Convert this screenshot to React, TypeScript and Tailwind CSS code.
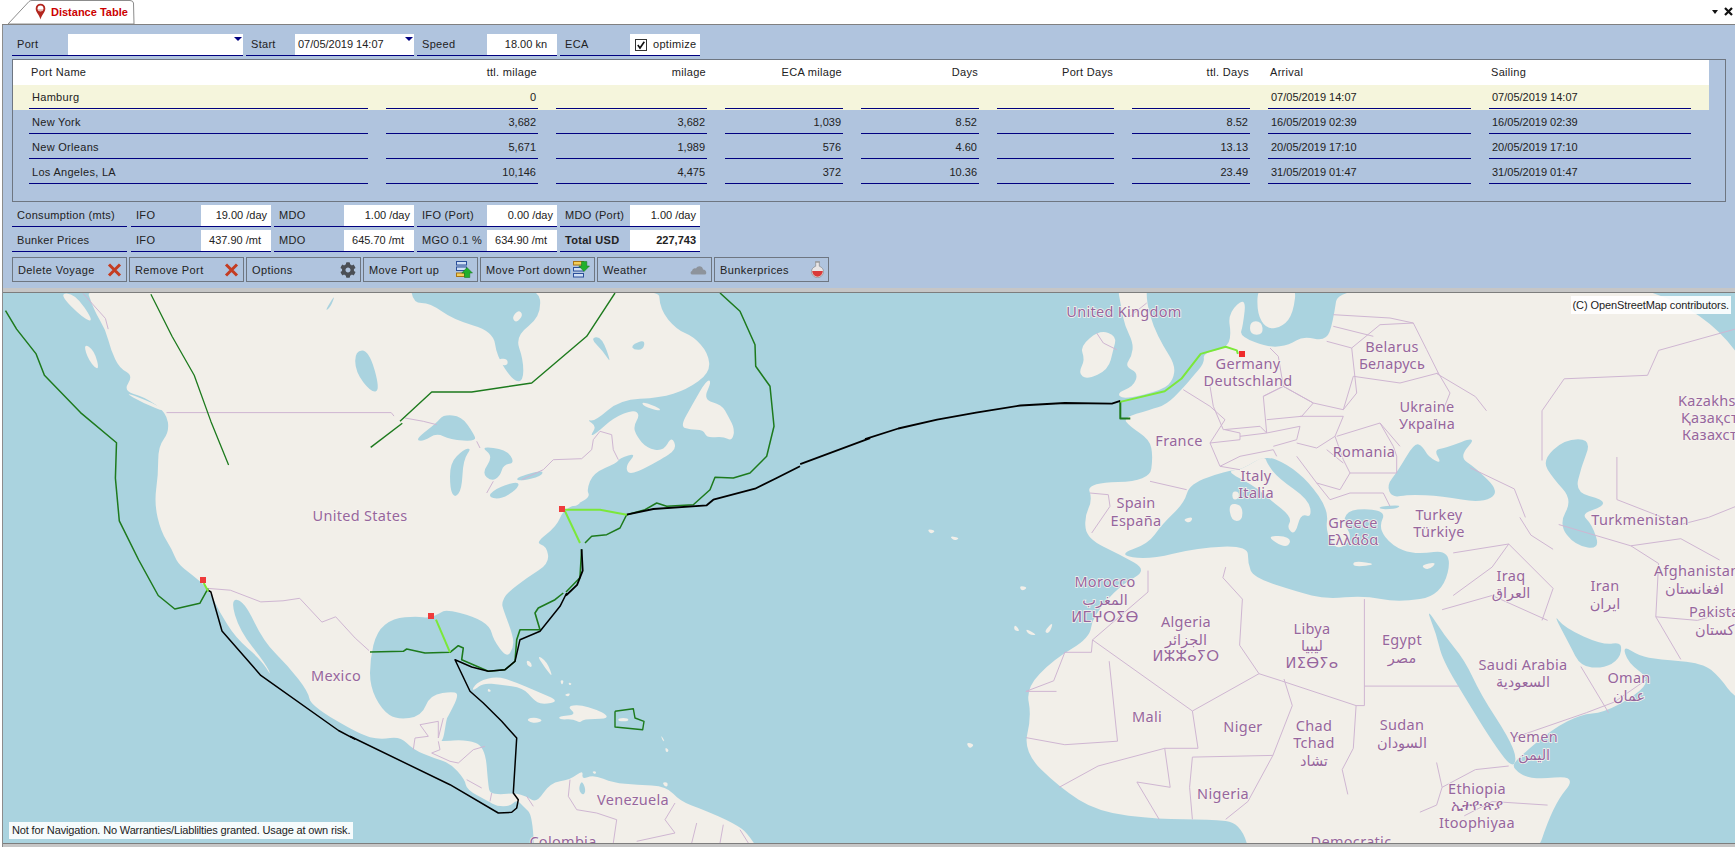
import React from "react";
import { FaCog } from "react-icons/fa";

const LAND = "#f2efe9";
const WATER = "#aad3df";
const BORDER = "#cfb6d2";
const DARK = "#1d7a1d";
const LIME = "#7be83a";

type Xf = [number, number, number, number];

// crops the shapes were traced from: page x = tx + x * sx, page y = ty + y * sy
const A: Xf = [0, 290, 0.55494, 0.35524];
const B: Xf = [865, 290, 0.55494, 0.35524];
const C: Xf = [1050, 293, 1 / 3, 1 / 3];
const D: Xf = [400, 293, 1 / 3, 1 / 3];
const E: Xf = [350, 593, 1 / 3, 1 / 3];

const seg = (f: Xf, s: string) =>
  s.split(" ").map((p) => {
    const [x, y] = p.split(",").map(Number);
    return [f[0] + x * f[2], f[1] + y * f[3]];
  });

const mid = (a: number[], b: number[]) => `${((a[0] + b[0]) / 2).toFixed(1)} ${((a[1] + b[1]) / 2).toFixed(1)}`;

// rounded closed outline through the midpoints
const blob = (pts: number[][]) => {
  let d = `M${mid(pts[pts.length - 1], pts[0])}`;
  pts.forEach((p, i) => {
    d += ` Q${p[0].toFixed(1)} ${p[1].toFixed(1)} ${mid(p, pts[(i + 1) % pts.length])}`;
  });
  return d + "Z";
};

const line = (pts: number[][]) => pts.map((p) => `${p[0].toFixed(1)},${p[1].toFixed(1)}`).join(" ");

const NORTH_AMERICA = [
  ...seg(A, "150,-30 170,60 190,110 200,170 215,220 240,240 222,285 260,300 300,345 305,400 285,440 285,520 278,600 290,680 310,730 320,770 345,800 375,840 395,905 425,980 470,1040 490,1090 478,1050 432,960 415,870 440,875 475,990 520,1060 555,1130 560,1170"),
  ...seg(E, "30,425 90,440 150,430 190,470 250,495 300,510 345,560 350,590 415,625 440,640 480,640 500,620 520,640 550,670 555,900 1300,900 1200,725 1150,690 1060,650 990,625 950,580 860,575 790,570 730,545 695,560 700,530 660,560 600,570 560,630 530,610 495,600 450,605 420,600 415,580 405,460 350,440 270,445 280,440 290,375 295,370 325,310 315,295 240,305 215,370 140,380 95,350 60,280 60,200 80,115 130,75 200,70 240,75 270,60 290,50 370,70 420,100 430,140 470,195 490,165 490,130 460,50 455,30 470,0"),
  ...seg(A, "950,810 990,770 985,720"),
  ...seg(D, "405,750 470,700 490,650 540,630 570,610 560,590 580,540 650,510 660,495 710,480 675,520 690,550 800,490 830,465 815,430 790,475 740,465 710,430 700,400 720,365 700,350 640,375 590,420 570,430 590,400 560,380 585,385 660,320 780,315 860,290 930,240 925,180 880,130 830,110 780,50 775,-30"),
];

const WATER_SHAPES: [Xf, string][] = [
  [D, "30,-30 40,30 90,30 160,80 280,115 290,190 340,265 370,265 370,200 345,130 425,70 415,-30"],
  [D, "45,440 110,390 130,365 185,370 220,420 230,445 150,440 110,420 70,445"],
  [D, "150,510 190,470 215,465 190,500 185,590 165,615 150,590"],
  [D, "240,460 320,470 345,510 310,515 300,550 275,565 245,540 280,490"],
  [D, "260,610 300,580 360,565 350,590 300,620"],
  [D, "345,555 430,530 425,550 360,565"],
  [D, "695,155 735,140 730,170 700,170"],
  [D, "570,135 605,130 635,215 610,175"],
  [E, "695,560 708,590 700,608 685,590"],
  [A, "640,170 665,170 685,280 670,290 640,230"],
  [A, "585,60 605,10 595,50"],
  // Mediterranean, Black Sea, Marmara, Caspian, Red Sea, Gulf
  [B, "455,745 510,715 535,660 575,600 585,545 650,510 680,505 720,465 760,490 800,540 835,620 830,680 850,735 880,700 860,650 875,615 940,620 925,670 950,720 990,745 1060,730 1040,860 960,880 900,860 830,870 780,850 700,810 690,770 690,720 600,725 510,760"],
  [B, "940,550 960,510 990,430 1005,440 1015,470 1040,490 1025,450 1045,445 1105,410 1070,470 1100,500 1145,570 1110,600 1040,580 980,575 950,585"],
  [B, "925,610 965,605 960,615 930,618"],
  [B, "1220,480 1260,420 1310,420 1290,500 1280,570 1330,590 1330,610 1290,630 1310,660 1325,730 1280,720 1250,660 1275,590 1240,530"],
  [B, "1010,890 1045,975 1080,1040 1110,1140 1160,1260 1175,1320 1165,1345 1130,1270 1090,1170 1040,1040 1030,970"],
  [B, "1240,910 1260,950 1330,1000 1365,990 1360,1040 1330,1065 1290,1060 1270,1000"],
];

const LAND_SHAPES: [Xf, string][] = [
  [A, "105,10 135,10 170,90 150,80"],
  [A, "150,150 170,170 180,230 160,200"],
  [A, "220,285 280,320 300,345 260,320"],
  [D, "335,75 355,50 370,65 350,90"],
  [D, "290,200 320,195 325,215 305,218"],
  [D, "725,325 780,345 780,355 730,340"],
  [D, "840,400 880,330 920,260 935,265 910,320 965,335 985,370 1005,410 995,445 970,430 920,435 910,410 870,410"],
  [D, "495,640 545,625 530,640"],
  [E, "365,290 385,265 440,250 490,265 560,295 630,325 575,335 550,320 520,285 450,275 400,270 375,290"],
  [E, "415,285 425,295 412,297"],
  [E, "625,370 680,365 650,340 690,335 740,350 770,365 770,378 700,378 690,390 670,378 630,380"],
  [E, "530,378 555,372 580,382 560,390 540,388"],
  [E, "805,375 835,375 835,385 805,385"],
  [E, "530,200 545,210 545,225 530,215"],
  [E, "560,185 590,205 610,255 585,225"],
  [E, "630,262 642,262 636,278"],
  [E, "655,268 667,272 658,278"],
  [E, "642,305 662,300 655,312"],
  [E, "725,535 740,535 735,545"],
  [E, "935,568 955,568 950,585"],
  [E, "932,425 945,445 938,445"],
  [E, "945,462 958,472 948,480"],
  // Italy and the Mediterranean islands
  [B, "650,510 680,505 720,465 725,490 745,530 800,590 805,640 785,630 775,690 760,670 770,640 730,590 700,550"],
  [B, "720,690 770,695 760,730"],
  [B, "655,600 680,605 680,650 660,650"],
  [B, "662,565 675,570 672,590 662,590"],
  [B, "880,762 925,772 880,780"],
  [B, "1000,775 1032,765 1015,790"],
  [B, "572,645 592,638 585,658"],
  [B, "112,672 128,678 118,688"],
  [B, "152,692 172,698 160,706"],
  [B, "278,832 294,838 282,848"],
  [B, "270,940 280,962 268,958"],
  [B, "288,952 312,972 295,970"],
  [B, "322,962 340,932 332,968"],
  [B, "182,1272 198,1280 188,1292"],
  // British Isles, Scandinavia
  [C, "200,-30 290,-30 290,30 310,100 340,160 375,215 370,260 340,290 220,320 200,300 250,280 265,240 225,220 245,190 250,150 225,100 215,50"],
  [C, "90,160 150,110 200,130 190,170 175,230 110,260 85,240 105,200"],
  [C, "625,-30 740,-30 730,60 700,100 650,110 620,60"],
  [C, "600,85 635,85 640,125 600,125"],
];

const BORDERS: [Xf, string][] = [
  [A, "300,345 705,345 710,355"],
  [A, "375,840 415,845 470,878 510,875 540,868 580,935 605,920 640,980 665,1015"],
  [A, "150,10 190,80 195,110"],
  [D, "15,375 70,385 110,395"],
  [D, "230,445 240,465"],
  [D, "260,600 280,565"],
  [D, "365,560 430,530 460,500 545,497 575,470 580,440 600,415 635,425 640,470 655,500"],
  [E, "190,470 195,435 235,430 210,395 265,385 265,435 280,375"],
  [E, "265,445 270,470 245,480 300,505"],
  [E, "300,505 325,510 370,470 405,460"],
  [E, "350,560 395,585"],
  [E, "425,600 420,625"],
  [E, "530,610 550,640"],
  [E, "660,560 655,610 680,650 740,660 800,680 790,750"],
  [E, "975,630 945,680 975,720 860,745"],
  [E, "1040,690 1025,750"],
  [E, "1120,695 1110,750"],
  [E, "1170,710 1195,750"],
  [B, "510,790 510,850 410,985 408,1020 360,1020 340,1100 290,1130 345,1130"],
  [B, "410,985 590,1185 710,1080"],
  [B, "440,1045 455,1270 360,1280 290,1260"],
  [B, "590,1185 600,1290 540,1290 420,1340 350,1400"],
  [B, "650,780 645,810 680,870 675,1000 710,1080 750,1100 885,1170"],
  [B, "900,870 900,1170 885,1170 880,1290 860,1350 870,1420"],
  [B, "900,1115 1070,1115"],
  [B, "755,1095 770,1170 735,1310 590,1315 585,1400 590,1490"],
  [B, "735,1310 690,1440 650,1490"],
  [B, "1030,1330 1040,1400 1030,1450 1000,1470"],
  [B, "1160,1340 1100,1350 1040,1400"],
  [B, "1230,1450 1130,1440 1080,1480"],
  [B, "540,1290 550,1400 490,1385 530,1490"],
  [B, "1060,740 1160,715 1240,840 1220,930"],
  [B, "1060,860 1130,780 1160,715"],
  [B, "1130,860 1230,930"],
  [B, "1040,900 1130,860"],
  [B, "1290,1060 1340,1190"],
  [B, "1170,1260 1300,1190 1350,1160 1410,1095"],
  [B, "1380,720 1430,770 1425,920 1470,1040"],
  [B, "1180,640 1200,690 1240,730"],
  [B, "1250,660 1380,720 1470,700 1540,760"],
  [B, "1355,470 1355,590 1470,660 1520,640 1568,610"],
  [B, "1220,480 1220,340 1260,250 1410,240 1430,170 1568,110"],
  [B, "1120,340 1100,300 1030,235"],
  [B, "1425,920 1500,930 1568,900"],
  [B, "1090,500 1170,560 1190,640"],
  [C, "480,280 490,340 520,410 630,400 650,420 640,310 700,280 685,190 660,165"],
  [C, "640,310 700,280 790,330 755,370 650,380"],
  [C, "700,280 790,330 880,350 920,300 905,165 830,145"],
  [C, "300,565 410,590"],
  [C, "400,290 480,340 525,380 480,450 510,520 570,530"],
  [C, "480,450 570,440 570,420 525,410"],
  [C, "510,520 570,490 670,470 680,490"],
  [C, "570,430 650,420 750,400 740,440 670,460"],
  [C, "750,370 880,370 855,430 800,465 740,450"],
  [C, "860,430 990,390 1030,460 1040,490 1040,540 900,540 880,500 855,430"],
  [C, "905,165 990,95 1090,90 1130,170 1165,240 1050,270 910,250 880,350"],
  [C, "850,100 970,130"],
  [C, "850,65 1020,75 1090,90"],
  [C, "990,390 1050,460"],
  [C, "740,490 800,570 870,590 900,540"],
  [C, "830,470 880,510"],
  [C, "800,570 840,620 900,600 1000,600 1020,640"],
  [C, "120,600 175,605 180,640 125,720"],
  [C, "1165,240 1200,300 1180,350"],
  [C, "140,120 160,150 200,170"],
  [C, "290,30 240,70"],
];

const EURASIA_AFRICA =
  "855,-30 1640,-30 1640,1200 1568,1150 1540,1090 1510,1050 1430,1040 1395,1030 1365,1000 1375,1050 1415,1095 1390,1140 1330,1190 1290,1195 1240,1235 1175,1320 1165,1345 1200,1380 1285,1365 1240,1450 1200,1640 700,1640 680,1500 620,1490 530,1490 420,1470 350,1400 285,1300 300,1200 290,1120 340,1040 405,980 410,920 460,830 510,790 460,745 400,700 395,640 410,590 399,543 513,538 519,468 513,421 477,384 465,360 513,337 543,323 573,276 591,243 612,205 609,177 651,163 660,130 654,65 687,18 681,102 675,130 729,163 765,154 789,130 831,144 843,93";

const ROUTES: [Xf, string, string, number][] = [
  [A, "272,12 310,130 350,240 380,370 412,493", DARK, 1.3],
  [D, "645,0 560,130 395,270 215,297 95,297 0,385", DARK, 1.4],
  [A, "668,443 725,375", DARK, 1.4],
  [A, "10,58 30,110 65,180 80,240 145,345 210,430 208,530 215,650 250,760 285,860 315,898 360,882 375,840", DARK, 1.5],
  [D, "960,0 1020,55 1065,155 1067,220 1110,280 1122,400 1100,490 1050,540 1000,555 945,553 930,590 880,635 800,640 770,630 735,650 680,665", DARK, 1.5],
  [D, "680,665 660,705 620,725 575,730 555,750", DARK, 1.5],
  [A, "1048,730 1045,810 1020,850", DARK, 1.5],
  [E, "640,0 615,20 565,45 555,60 570,110 510,110 500,140 495,205 465,230 415,235 335,200 340,165 325,158 300,178 225,180 170,168 160,175 60,177", DARK, 1.6],
  [E, "795,355 850,347 855,375 882,385 878,410 795,402 795,355", DARK, 1.4],
  [D, "1200,520 1130,555 1065,587 940,620 920,637 760,648 680,665", "#000", 1.8],
  [A, "1568,417 1442,490", "#000", 1.8],
  [A, "1048,730 1050,790 1040,830 1020,860", "#000", 1.8],
  [E, "650,0 630,40 570,115 510,140 495,205 465,230 415,235 365,222 315,200 360,295 400,330 455,385 500,435 490,600 505,620 500,645 485,658 445,660 300,575 0,430", "#000", 1.5],
  [A, "640,1265 610,1240 470,1085 400,960 380,850 375,845", "#000", 1.5],
  [D, "490,650 600,650 680,665", LIME, 2],
  [D, "495,655 540,750", LIME, 2],
  [E, "258,80 300,178", LIME, 2],
  [A, "367,825 375,848", LIME, 2],
  [B, "0,420 60,390 130,365 200,345 280,325 360,318 445,320 460,312", "#000", 1.8],
  [B, "460,315 460,362 478,362", DARK, 2],
  [B, "460,315 540,285 570,250 605,180 650,160 670,170 672,180", LIME, 2],
];

const LABELS: [string, number, number][] = [
  ["United States", 360, 515],
  ["Mexico", 336, 675],
  ["Venezuela", 633, 799],
  ["Colombia", 563, 841],
  ["United Kingdom", 1124, 311],
  ["Germany", 1248, 363],
  ["Deutschland", 1248, 380],
  ["Belarus", 1392, 346],
  ["Беларусь", 1392, 363],
  ["Ukraine", 1427, 406],
  ["Україна", 1427, 423],
  ["France", 1179, 440],
  ["Romania", 1364, 451],
  ["Italy", 1256, 475],
  ["Italia", 1256, 492],
  ["Spain", 1136, 502],
  ["España", 1136, 520],
  ["Greece", 1353, 522],
  ["Ελλάδα", 1353, 539],
  ["Turkey", 1439, 514],
  ["Türkiye", 1439, 531],
  ["Turkmenistan", 1640, 519],
  ["Iraq", 1511, 575],
  ["العراق", 1511, 592],
  ["Iran", 1605, 585],
  ["ایران", 1605, 603],
  ["Morocco", 1105, 581],
  ["المغرب", 1105, 599],
  ["ⵍⵎⵖⵔⵉⴱ", 1105, 616],
  ["Algeria", 1186, 621],
  ["الجزائر", 1186, 639],
  ["ⵍⵣⵣⴰⵢⵔ", 1186, 655],
  ["Libya", 1312, 628],
  ["ليبيا", 1312, 645],
  ["ⵍⵉⴱⵢⴰ", 1312, 662],
  ["Egypt", 1402, 639],
  ["مصر", 1402, 657],
  ["Saudi Arabia", 1523, 664],
  ["السعودية", 1523, 681],
  ["Oman", 1629, 677],
  ["عمان", 1629, 695],
  ["Mali", 1147, 716],
  ["Niger", 1243, 726],
  ["Chad", 1314, 725],
  ["Tchad", 1314, 742],
  ["تشاد", 1314, 760],
  ["Sudan", 1402, 724],
  ["السودان", 1402, 742],
  ["Yemen", 1534, 736],
  ["اليمن", 1534, 754],
  ["Nigeria", 1223, 793],
  ["Ethiopia", 1477, 788],
  ["ኢትዮጵያ", 1477, 804],
  ["Itoophiyaa", 1477, 822],
  ["Democratic", 1351, 841],
];

// the ones cut off by the right edge start at a fixed x
const EDGE_LABELS: [string, number, number][] = [
  ["Kazakhstan", 1678, 400],
  ["Қазақстан", 1681, 417],
  ["Казахстан", 1682, 434],
  ["Afghanistan", 1654, 570],
  ["افغانستان", 1665, 588],
  ["Pakistan", 1689, 611],
  ["پاکستان", 1695, 629],
];

const MapView = () => (
  <svg viewBox="3 293 1732 550" className="block w-[1732px] h-[550px]">
    <rect x="0" y="293" width="1735" height="550" fill={WATER} />
    <path d={blob(NORTH_AMERICA)} fill={LAND} />
    <path d={blob(seg(B, EURASIA_AFRICA))} fill={LAND} />
    {WATER_SHAPES.map(([f, s]) => (
      <path key={s} d={blob(seg(f, s))} fill={WATER} />
    ))}
    {LAND_SHAPES.map(([f, s]) => (
      <path key={s} d={blob(seg(f, s))} fill={LAND} />
    ))}
    {BORDERS.map(([f, s]) => (
      <polyline key={s} points={line(seg(f, s))} fill="none" stroke={BORDER} strokeWidth="1" strokeLinejoin="round" />
    ))}

    <g
      className="font-['Noto_Sans','DejaVu_Sans',sans-serif] text-[14.5px] [paint-order:stroke]"
      fill="#96669d"
      stroke="#f6f3ee"
      strokeWidth="1.5"
    >
      {LABELS.map(([t, x, y]) => (
        <text key={t} x={x} y={y} textAnchor="middle" dominantBaseline="central">
          {t}
        </text>
      ))}
      {EDGE_LABELS.map(([t, x, y]) => (
        <text key={t} x={x} y={y} dominantBaseline="central">
          {t}
        </text>
      ))}
    </g>

    {ROUTES.map(([f, s, color, w]) => (
      <polyline key={s + color} points={line(seg(f, s))} fill="none" stroke={color} strokeWidth={w} strokeLinejoin="round" />
    ))}

    <rect x="559" y="506" width="6" height="6" fill="#ef3b3b" />
    <rect x="428" y="613" width="6" height="6" fill="#ef3b3b" />
    <rect x="200" y="577" width="6" height="6" fill="#ef3b3b" />
    <rect x="1239" y="351" width="6" height="6" fill="#ef2b2b" />
  </svg>
);

const PinIcon = () => (
  <svg width="11" height="17" viewBox="0 0 11 17">
    <path d="M5.5 16.5 C4.5 12 .7 9.5 .7 5.5 A4.8 4.8 0 0 1 10.3 5.5 C10.3 9.5 6.5 12 5.5 16.5Z" fill="#b3261e" />
    <circle cx="5.5" cy="5.3" r="2.9" fill="#fff" />
    <path d="M2.6 6.2 A3 3 0 0 0 8.4 6.2Z" fill="#e8b7b0" />
  </svg>
);

const RedX = () => (
  <svg width="15" height="14" viewBox="0 0 15 14">
    <path d="M2 1.5 L13 12.5 M13 1.5 L2 12.5" stroke="#c43c22" strokeWidth="3" />
  </svg>
);

const MoveUpIcon = () => (
  <svg width="17" height="17" viewBox="0 0 17 17">
    <rect x=".5" y=".5" width="10" height="3.5" fill="#cfe0f5" stroke="#2a4f9a" />
    <rect x=".5" y="6" width="10" height="3.5" fill="#cfe0f5" stroke="#2a4f9a" />
    <rect x=".5" y="12" width="8" height="3.5" fill="#f2cf5a" stroke="#a87414" />
    <path d="M11 6 L16.5 11.5 H13.8 V16 H8.5 V11.5 H5.8Z" transform="translate(0 .5)" fill="#22b02c" stroke="#13701a" strokeWidth=".5" />
  </svg>
);

const MoveDownIcon = () => (
  <svg width="17" height="17" viewBox="0 0 17 17">
    <rect x=".5" y=".5" width="10" height="3.5" fill="#f2cf5a" stroke="#a87414" />
    <rect x=".5" y="6.5" width="10" height="3.5" fill="#cfe0f5" stroke="#2a4f9a" />
    <rect x=".5" y="12.5" width="10" height="3.5" fill="#cfe0f5" stroke="#2a4f9a" />
    <path d="M11 10.5 L16.5 5 H13.8 V.5 H8.5 V5 H5.8Z" fill="#22b02c" stroke="#13701a" strokeWidth=".5" />
  </svg>
);

const CloudIcon = () => (
  <svg width="17" height="10" viewBox="0 0 17 10">
    <path d="M2 9.5 C.2 9.5 0 6.5 2 6 C2.5 3 5 2.8 6 3.5 C7.5 .2 12.5 .2 13 4.5 C16.5 4.5 17.5 9.5 14.5 9.5Z" fill="#8d939b" />
  </svg>
);

const FlaskIcon = () => (
  <svg width="13" height="17" viewBox="0 0 13 17">
    <path d="M4.7 1 H8.3 V5.2 C11 6.2 12.5 8.2 12.5 10.6 A6 6 0 0 1 .5 10.6 C.5 8.2 2 6.2 4.7 5.2Z" fill="#e9e6e6" stroke="#8a8a8a" strokeWidth=".7" />
    <path d="M1.2 10 H11.8 A5.3 5.7 0 0 1 1.2 10Z" fill="#d93a3a" />
    <rect x="4" y=".3" width="5" height="1.2" fill="#9a9a9a" />
  </svg>
);

const Field = ({
  label,
  w,
  labelW,
  bold,
  children,
}: {
  label: string;
  w: number;
  labelW: number;
  bold?: boolean;
  children?: React.ReactNode;
}) => (
  <div className="flex h-[22px] border-b border-[#000080] shrink-0" style={{ width: w }}>
    <div className={`pl-[5px] leading-[21px] shrink-0 ${bold ? "font-bold" : ""}`} style={{ width: labelW }}>
      {label}
    </div>
    <div className="relative flex-1 bg-white leading-[21px]">{children}</div>
  </div>
);

const Arrow = () => (
  <div className="absolute right-[1px] top-[3px] w-0 h-0 border-l-[4px] border-r-[4px] border-t-[4px] border-l-transparent border-r-transparent border-t-[#000080]" />
);

const Value = ({ text, pr, bold }: { text: string; pr: number; bold?: boolean }) => (
  <div className={`text-right tracking-normal ${bold ? "font-bold" : ""}`} style={{ paddingRight: pr }}>
    {text}
  </div>
);

const COLS = "grid grid-cols-[339px_152px_151px_118px_118px_117px_118px_203px_202px] gap-x-[18px] pl-[16px]";

const HEADERS: [string, boolean][] = [
  ["Port Name", false],
  ["ttl. milage", true],
  ["milage", true],
  ["ECA milage", true],
  ["Days", true],
  ["Port Days", true],
  ["ttl. Days", true],
  ["Arrival", false],
  ["Sailing", false],
];

const ROWS = [
  ["Hamburg", "0", "", "", "", "", "", "07/05/2019 14:07", "07/05/2019 14:07"],
  ["New York", "3,682", "3,682", "1,039", "8.52", "", "8.52", "16/05/2019 02:39", "16/05/2019 02:39"],
  ["New Orleans", "5,671", "1,989", "576", "4.60", "", "13.13", "20/05/2019 17:10", "20/05/2019 17:10"],
  ["Los Angeles, LA", "10,146", "4,475", "372", "10.36", "", "23.49", "31/05/2019 01:47", "31/05/2019 01:47"],
];

const BUTTONS: [string, React.ReactNode][] = [
  ["Delete Voyage", <RedX />],
  ["Remove Port", <RedX />],
  ["Options", <FaCog className="text-[16px] text-[#4b4f55]" />],
  ["Move Port up", <MoveUpIcon />],
  ["Move Port down", <MoveDownIcon />],
  ["Weather", <CloudIcon />],
  ["Bunkerprices", <FlaskIcon />],
];

export default function App() {
  return (
    <div className="w-[1735px] h-[847px] overflow-hidden bg-white flex flex-col font-['Liberation_Sans','Noto_Sans',sans-serif] text-[11px] tracking-[0.3px] text-[#222]">
      <div className="flex items-end justify-between h-[25px] pl-[6px] pr-[2px] border-b border-[#808080] ml-[2px] shrink-0">
        <div className="relative w-[127px] h-[25px]">
          <svg className="absolute inset-0" width="127" height="25" viewBox="0 0 127 25">
            <path d="M0 25 L21 2.5 Q22 1.5 24 1.5 H122 Q125 1.5 125.5 4 L126 25 Z" fill="#fff" stroke="#8c8c8c" />
          </svg>
          <div className="absolute left-[27px] top-[4px]">
            <PinIcon />
          </div>
          <div className="absolute left-[43px] top-[7px] font-bold text-[#cc0000] tracking-normal leading-[13px] whitespace-nowrap">
            Distance Table
          </div>
        </div>
        <div className="flex items-center gap-[6px] h-[24px] pb-[1px]">
          <div className="w-0 h-0 border-l-[3.5px] border-r-[3.5px] border-t-[4px] border-l-transparent border-r-transparent border-t-[#111]" />
          <svg width="9" height="9" viewBox="0 0 9 9">
            <path d="M1 1 L8 8 M8 1 L1 8" stroke="#111" strokeWidth="2.2" />
          </svg>
        </div>
      </div>

      <div className="flex flex-col flex-1 ml-[2px] border-l border-[#8c8c8c] min-h-0">
        <div className="bg-[#b0c4de] h-[263px] pt-[9px] pl-[9px] shrink-0">
          <div className="flex gap-[3px]">
            <Field label="Port" w={231} labelW={56}>
              <Arrow />
            </Field>
            <Field label="Start" w={168} labelW={49}>
              <div className="pl-[3px] tracking-normal">07/05/2019 14:07</div>
              <Arrow />
            </Field>
            <Field label="Speed" w={140} labelW={70}>
              <Value text="18.00 kn" pr={10} />
            </Field>
            <Field label="ECA" w={140} labelW={70}>
              <div className="flex items-center h-full pl-[5px] gap-[6px]">
                <svg width="12" height="12" viewBox="0 0 12 12" className="shrink-0">
                  <rect x=".5" y=".5" width="11" height="11" fill="#fff" stroke="#333" />
                  <path d="M2.8 6 L5 9 L9.3 2.8" fill="none" stroke="#111" strokeWidth="1.6" />
                </svg>
                optimize
              </div>
            </Field>
          </div>

          <div className="mt-[3px] w-[1714px] h-[143px] border border-[#6e7681]">
            <div className={`${COLS} w-[1696px] h-[25px] bg-white leading-[25px]`}>
              {HEADERS.map(([h, right]) => (
                <div key={h} className={right ? "text-right pr-[1px]" : "pl-[2px]"}>
                  {h}
                </div>
              ))}
            </div>
            {ROWS.map((row, i) => (
              <div key={row[0]} className={`${COLS} w-[1696px] h-[25px] ${i === 0 ? "bg-[#f5f5dc]" : ""}`}>
                {row.map((c, j) => (
                  <div
                    key={j}
                    className={`h-[24px] border-b border-[#000080] leading-[25px] ${
                      j > 0 ? "tracking-normal" : ""
                    } ${j > 0 && j < 7 ? "text-right pr-[2px]" : "pl-[3px]"}`}
                  >
                    {c}
                  </div>
                ))}
              </div>
            ))}
          </div>

          <div className="flex mt-[3px]">
            <Field label="Consumption (mts)" w={115} labelW={115} />
            <div className="flex gap-[3px] ml-[4px]">
              <Field label="IFO" w={140} labelW={70}>
                <Value text="19.00 /day" pr={4} />
              </Field>
              <Field label="MDO" w={140} labelW={70}>
                <Value text="1.00 /day" pr={4} />
              </Field>
              <Field label="IFO (Port)" w={140} labelW={70}>
                <Value text="0.00 /day" pr={4} />
              </Field>
              <Field label="MDO (Port)" w={140} labelW={70}>
                <Value text="1.00 /day" pr={4} />
              </Field>
            </div>
          </div>

          <div className="flex mt-[3px]">
            <Field label="Bunker Prices" w={115} labelW={115} />
            <div className="flex gap-[3px] ml-[4px]">
              <Field label="IFO" w={140} labelW={70}>
                <Value text="437.90 /mt" pr={10} />
              </Field>
              <Field label="MDO" w={140} labelW={70}>
                <Value text="645.70 /mt" pr={10} />
              </Field>
              <Field label="MGO 0.1 %" w={140} labelW={70}>
                <Value text="634.90 /mt" pr={10} />
              </Field>
              <Field label="Total USD" w={140} labelW={70} bold>
                <Value text="227,743" pr={4} bold />
              </Field>
            </div>
          </div>

          <div className="flex gap-[2px] mt-[5px]">
            {BUTTONS.map(([label, icon]) => (
              <div
                key={label}
                className="flex items-center justify-between w-[115px] h-[25px] border border-[#6e7681] pl-[5px] pr-[4px] tracking-[0.4px]"
              >
                <span className="pt-[1px]">{label}</span>
                {icon}
              </div>
            ))}
          </div>
        </div>

        <div className="h-[4px] bg-[#c6c6c6] shrink-0" />
        <div className="relative h-[551px] border-t border-[#7d7d7d] shrink-0">
          <MapView />
          <div className="absolute right-[4px] top-[3px] h-[18px] px-[2px] bg-white/90 leading-[18px] tracking-[-0.1px]">
            (C) OpenStreetMap contributors.
          </div>
          <div className="absolute left-[6px] top-[529px] h-[17px] px-[3px] bg-white/90 leading-[17px] tracking-[-0.15px]">
            Not for Navigation. No Warranties/Liablilties granted. Usage at own risk.
          </div>
        </div>
        <div className="flex-1 bg-[#c6c6c6] border-t border-[#7d7d7d]" />
      </div>
    </div>
  );
}
